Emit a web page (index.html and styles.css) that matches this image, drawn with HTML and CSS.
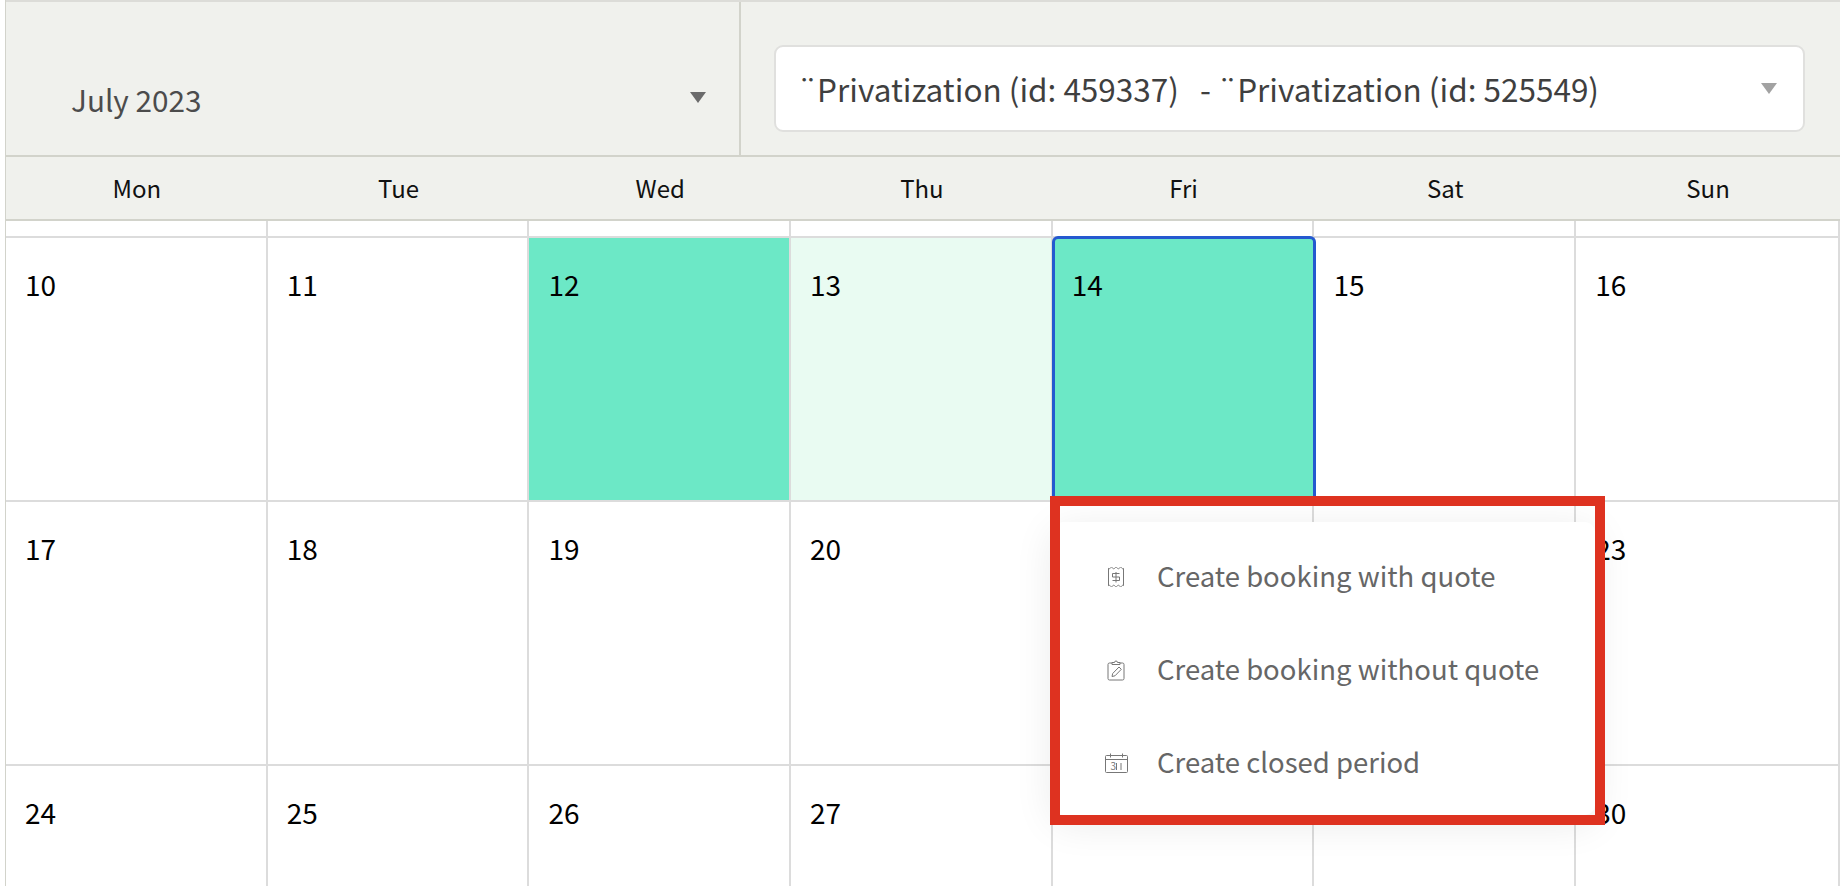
FILE: index.html
```html
<!DOCTYPE html>
<html lang="en">
<head>
    <meta charset="UTF-8">
    <meta name="viewport" content="width=device-width, initial-scale=1.0">
    <title>Calendar</title>
    <link rel="stylesheet" href="styles.css">
</head>
<body>
    <div class="calendar">
        <div class="toolbar">
            <div class="month-picker">
                <span class="month-label">July 2023</span>
                <span class="arrow arrow-dark"></span>
            </div>
            <div class="property-cell">
                <div class="property-select">
                    <span class="property-label">¨Privatization (id: 459337) &nbsp; - ¨Privatization (id: 525549)</span>
                    <span class="arrow arrow-light"></span>
                </div>
            </div>
        </div>
        <div class="weekdays">
            <div>Mon</div><div>Tue</div><div>Wed</div><div>Thu</div><div>Fri</div><div>Sat</div><div>Sun</div>
        </div>
        <div class="days">
            <div class="day day-stub"></div><div class="day day-stub"></div><div class="day day-stub"></div><div class="day day-stub"></div><div class="day day-stub"></div><div class="day day-stub"></div><div class="day day-stub"></div>

            <div class="day">10</div>
            <div class="day">11</div>
            <div class="day day-booked">12</div>
            <div class="day day-pale">13</div>
            <div class="day day-booked day-selected">14</div>
            <div class="day">15</div>
            <div class="day">16</div>

            <div class="day">17</div>
            <div class="day">18</div>
            <div class="day">19</div>
            <div class="day">20</div>
            <div class="day">21</div>
            <div class="day">22</div>
            <div class="day">23</div>

            <div class="day">24</div>
            <div class="day">25</div>
            <div class="day">26</div>
            <div class="day">27</div>
            <div class="day">28</div>
            <div class="day">29</div>
            <div class="day">30</div>
        </div>

        <div class="create-menu">
            <div class="menu-item">
                <span class="menu-icon">
                    <svg width="18" height="20" viewBox="0 0 18 20" fill="none" stroke="#777" stroke-width="1">
                        <path d="M1.500 1.500v17M16.500 1.500v17" />
                        <path d="M1 1c1 1 1.500 1 2.300 0s1.500-1 2.300 0 1.500 1 2.300 0 1.500-1 2.300 0 1.500 1 2.300 0 1.500-1 2.300 0 1.500 1 1.700 0" />
                        <path d="M1 19c1-1 1.500-1 2.300 0s1.500 1 2.300 0 1.500-1 2.300 0 1.500 1 2.300 0 1.500-1 2.300 0 1.500 1 2.300 0 1.500-1 1.700 0" />
                        <path d="M12.500 6.500h-7v3.500h7v3.500h-7M9 5v10.500" />
                    </svg>
                </span>
                <span class="menu-text">Create booking with quote</span>
            </div>
            <div class="menu-item">
                <span class="menu-icon">
                    <svg width="18" height="22" viewBox="0 0 18 22" fill="none" stroke="#777" stroke-width="1">
                        <path d="M5 4H2.500a1.500 1.500 0 0 0-1.500 1.500v14A1.500 1.500 0 0 0 2.500 21h13a1.500 1.500 0 0 0 1.500-1.500v-14A1.500 1.500 0 0 0 15.500 4H13" />
                        <path d="M5 5.500V3.500h2.500a1.500 1.500 0 0 1 3 0H13v2z" />
                        <path d="M5 17.500l.7-3 6.300-6.500 2.300 2.300-6.300 6.500z" />
                    </svg>
                </span>
                <span class="menu-text">Create booking without quote</span>
            </div>
            <div class="menu-item">
                <span class="menu-icon">
                    <svg width="23" height="20" viewBox="0 0 23 20" fill="none" stroke="#777" stroke-width="1">
                        <rect x="0.500" y="2.500" width="22" height="17" rx="1" />
                        <path d="M0.500 6.500h22M5.500 0.500v4M17.500 0.500v4M11.500 10v7M16 10v7" />
                        <text x="5.500" y="17" class="icon-date">3</text>
                    </svg>
                </span>
                <span class="menu-text">Create closed period</span>
            </div>
        </div>
        <div class="annotation"></div>
    </div>
</body>
</html>
```

FILE: styles.css
```css
html, body {
    margin: 0;
    padding: 0;
    height: 886px;
    overflow: hidden;
    background: #fff;
}
body {
    font-family: "Noto Sans CJK SC", "Noto Sans", sans-serif;
    color: #111;
}
.calendar {
    position: relative;
    width: 1835px;
    height: 886px;
    margin-left: 5px;
    border-left: 1px solid #d2d3cb;
    box-sizing: border-box;
    overflow: hidden;
}
.toolbar {
    display: flex;
    height: 157px;
    box-sizing: border-box;
    background: #f0f1ed;
    border-top: 2px solid #dcdcd8;
    border-bottom: 2px solid #d2d3cb;
}
.month-picker {
    width: 735px;
    box-sizing: border-box;
    border-right: 2px solid #d2d3cb;
    display: flex;
    justify-content: space-between;
    align-items: flex-start;
    padding: 80px 33px 0 65px;
}
.month-label {
    font-size: 29.7px;
    line-height: 36px;
    color: #4c4c4c;
}
.property-cell {
    flex: 1;
    padding: 43px 35px 0 33px;
}
.property-select {
    height: 87px;
    box-sizing: border-box;
    background: #fff;
    border: 2px solid #e0e0de;
    border-radius: 9px;
    display: flex;
    justify-content: space-between;
    align-items: center;
    padding: 0 26px 0 22px;
}
.property-label {
    font-size: 31.5px;
    line-height: 40px;
    color: #3f3f3f;
    margin-top: -2px;
}
.arrow {
    width: 0;
    height: 0;
    border-left: 8px solid transparent;
    border-right: 8px solid transparent;
    border-top: 11px solid #6b6b6b;
}
.arrow-dark {
    margin-top: 10px;
}
.arrow-light {
    border-top-color: #a2a2a2;
}
.weekdays {
    display: grid;
    grid-template-columns: repeat(6, 261.7px) 1fr;
    height: 64px;
    box-sizing: border-box;
    background: #f0f1ed;
    border-bottom: 2px solid #d2d3cb;
}
.weekdays div {
    text-align: center;
    font-size: 24px;
    line-height: 62px;
}
.days {
    display: grid;
    grid-template-columns: repeat(6, 261.7px) 1fr;
    grid-template-rows: 17px;
    grid-auto-rows: 264px;
}
.day {
    box-sizing: border-box;
    border-right: 2px solid #dcdcdc;
    border-bottom: 2px solid #dcdcdc;
    padding: 24px 0 0 19px;
    font-size: 28px;
    line-height: 44px;
    color: #000;
}
.day-stub {
    padding: 0;
}
.day-booked {
    background: #6ce8c6;
}
.day-pale {
    background: #e9fbf2;
}
.day-selected {
    margin: -2px -2px 0 -1px;
    border: 3px solid #2459cf;
    border-bottom: 0;
    border-radius: 6px 6px 0 0;
    padding: 23px 0 0 17px;
    position: relative;
}
.create-menu {
    position: absolute;
    left: 1047px;
    top: 522px;
    width: 542px;
    height: 293px;
    box-sizing: border-box;
    padding-top: 8px;
    background: #fff;
    border-radius: 10px;
    box-shadow: 0 8px 40px rgba(0, 0, 0, 0.09);
}
.menu-item {
    display: flex;
    align-items: center;
    height: 93px;
    padding-left: 48px;
    font-size: 27.5px;
    color: #666;
}
.menu-text {
    margin-top: -3px;
}
.menu-icon {
    display: flex;
    justify-content: center;
    width: 30px;
    margin-right: 26px;
}
.icon-date {
    font-size: 10px;
    fill: #777;
    stroke: none;
}
.annotation {
    position: absolute;
    left: 1044px;
    top: 496px;
    width: 555px;
    height: 329px;
    box-sizing: border-box;
    border: 10px solid #de3220;
}
```
